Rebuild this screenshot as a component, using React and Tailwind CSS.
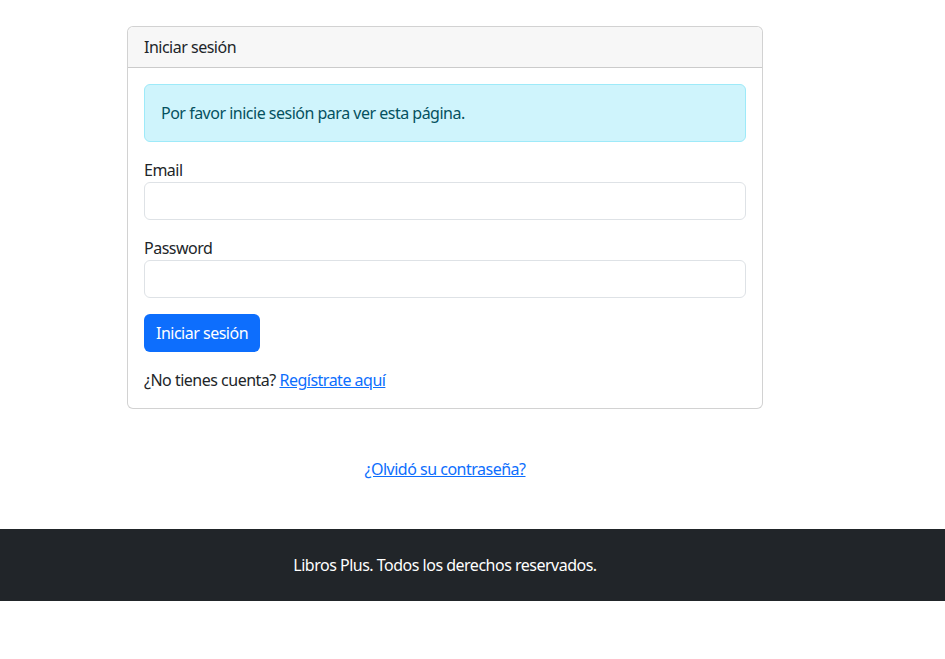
export default function App() {
  return (
    <div className="min-h-[659px] bg-white text-[#212529] text-base leading-6 tracking-[-0.5px]" style={{ fontFamily: '"Noto Sans", "Liberation Sans", sans-serif' }}>
      <div className="pt-[26px] ml-[127px] w-[636px]">
        <div className="rounded-md border border-[rgba(0,0,0,0.175)] bg-white">
          <div className="px-4 py-2 bg-[#f7f7f7] border-b border-[rgba(0,0,0,0.175)] rounded-t-md">Iniciar sesión</div>
          <div className="p-4">
            <div className="mb-4 rounded-md border border-[#9eeaf9] bg-[#cff4fc] text-[#055160] p-4">
              Por favor inicie sesión para ver esta página.
            </div>
            <div className="mb-4">
              <label className="block">Email</label>
              <input type="email" className="block w-full h-[38px] rounded-md border border-[#dee2e6] px-3 outline-none" />
            </div>
            <div className="mb-4">
              <label className="block">Password</label>
              <input type="password" className="block w-full h-[38px] rounded-md border border-[#dee2e6] px-3 outline-none" />
            </div>
            <button className="h-[38px] px-3 rounded-md bg-[#0d6efd] text-white mb-4">Iniciar sesión</button>
            <p>
              ¿No tienes cuenta? <a href="#" className="text-[#0d6efd] underline">Regístrate aquí</a>
            </p>
          </div>
        </div>
        <div className="mt-12 mb-12 text-center">
          <a href="#" className="text-[#0d6efd] underline">¿Olvidó su contraseña?</a>
        </div>
      </div>
      <footer className="bg-[#212529] text-white py-6">
        <div className="ml-[127px] w-[636px] text-center">Libros Plus. Todos los derechos reservados.</div>
      </footer>
    </div>
  );
}
